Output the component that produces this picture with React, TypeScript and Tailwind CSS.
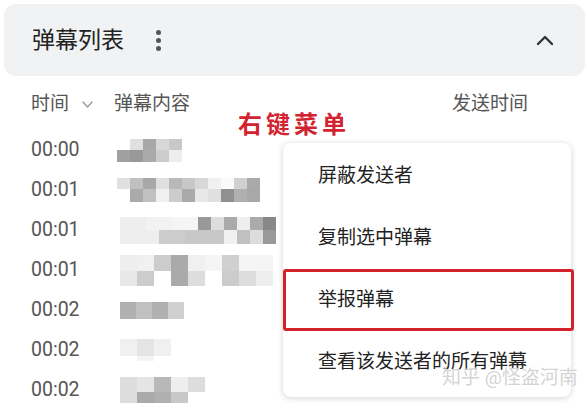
import { Fragment } from 'react';

type Mosaic = {
  cell: string;
  lines: { h: string; offset: string; cells: string[] }[];
};

const ROWS: { time: string; mosaic: Mosaic }[] = [
  {
    time: '00:00',
    mosaic: {
      cell: 'w-[13px]',
      lines: [
        { h: 'h-[11px]', offset: 'ml-[13px]', cells: ['bg-[#e0e0e0]', 'bg-[#a8a8a8]', 'bg-[#d8d8d8]', 'bg-[#c8c8c8]'] },
        { h: 'h-[12px]', offset: 'ml-0', cells: ['bg-[#a0a0a0]', 'bg-[#999999]', 'bg-[#aaaaaa]', 'bg-[#cccccc]', 'bg-[#eeeeee]'] },
      ],
    },
  },
  {
    time: '00:01',
    mosaic: {
      cell: 'w-[13px]',
      lines: [
        {
          h: 'h-[11px]',
          offset: 'ml-0',
          cells: ['bg-[#e0e0e0]', 'bg-[#c0c0c0]', 'bg-[#a8a8a8]', 'bg-[#e0e0e0]', 'bg-[#b8b8b8]', 'bg-[#c8c8c8]', 'bg-[#d8d8d8]', 'bg-[#f0f0f0]', 'bg-[#fafafa]', 'bg-[#d0d0d0]', 'bg-[#aaaaaa]'],
        },
        {
          h: 'h-[13px]',
          offset: 'ml-[13px]',
          cells: ['bg-[#aaaaaa]', 'bg-[#c0c0c0]', 'bg-[#f0f0f0]', 'bg-[#cccccc]', 'bg-[#aaaaaa]', 'bg-[#e8e8e8]', 'bg-[#e0e0e0]', 'bg-[#909090]', 'bg-[#b0b0b0]', 'bg-[#a8a8a8]'],
        },
      ],
    },
  },
  {
    time: '00:01',
    mosaic: {
      cell: 'w-[13px]',
      lines: [
        {
          h: 'h-[13px]',
          offset: 'ml-[3px]',
          cells: ['bg-[#eeeeee]', 'bg-[#eeeeee]', 'bg-[#f2f2f2]', 'bg-[#f2f2f2]', 'bg-[#f5f5f5]', 'bg-[#f5f5f5]', 'bg-[#999999]', 'bg-[#dddddd]', 'bg-[#aaaaaa]', 'bg-[#eeeeee]', 'bg-[#aaaaaa]', 'bg-[#888888]'],
        },
        {
          h: 'h-[14px]',
          offset: 'ml-[3px]',
          cells: ['bg-[#eeeeee]', 'bg-[#eeeeee]', 'bg-[#eeeeee]', 'bg-[#cccccc]', 'bg-[#cccccc]', 'bg-[#c8c8c8]', 'bg-[#c8c8c8]', 'bg-[#c8c8c8]', 'bg-[#f0f0f0]', 'bg-[#c0c0c0]', 'bg-[#dddddd]', 'bg-[#999999]'],
        },
      ],
    },
  },
  {
    time: '00:01',
    mosaic: {
      cell: 'w-[17px]',
      lines: [
        { h: 'h-[16px]', offset: 'ml-[3px]', cells: ['bg-[#eeeeee]', 'bg-[#f0f0f0]', 'bg-[#cccccc]', 'bg-[#aaaaaa]', 'bg-[#f0f0f0]', 'bg-[#f5f5f5]', 'bg-[#d0d0d0]', 'bg-[#f5f5f5]', 'bg-[#f5f5f5]'] },
        { h: 'h-[15px]', offset: 'ml-[3px]', cells: ['bg-[#e8e8e8]', 'bg-[#cccccc]', 'bg-[#ffffff]', 'bg-[#aaaaaa]', 'bg-[#dddddd]', 'bg-[#ffffff]', 'bg-[#cccccc]', 'bg-[#dddddd]', 'bg-[#eeeeee]'] },
      ],
    },
  },
  {
    time: '00:02',
    mosaic: {
      cell: 'w-[16px]',
      lines: [{ h: 'h-[17px]', offset: 'ml-[3px]', cells: ['bg-[#b0b0b0]', 'bg-[#c0c0c0]', 'bg-[#b0b0b0]', 'bg-[#d0d0d0]'] }],
    },
  },
  {
    time: '00:02',
    mosaic: {
      cell: 'w-[17px]',
      lines: [
        { h: 'h-[17px]', offset: 'ml-[3px]', cells: ['bg-[#f0f0f0]', 'bg-[#e4e4e4]', 'bg-[#f0f0f0]'] },
        { h: 'h-[5px]', offset: 'ml-[20px]', cells: ['bg-[#f4f4f4]'] },
      ],
    },
  },
  {
    time: '00:02',
    mosaic: {
      cell: 'w-[17px]',
      lines: [
        { h: 'h-[15px]', offset: 'ml-[3px]', cells: ['bg-[#dddddd]', 'bg-[#e5e5e5]', 'bg-[#b8b8b8]', 'bg-[#eeeeee]', 'bg-[#dddddd]'] },
        { h: 'h-[12px]', offset: 'ml-[3px]', cells: ['bg-[#dddddd]', 'bg-[#aaaaaa]', 'bg-[#b0b0b0]', 'bg-[#c8c8c8]'] },
      ],
    },
  },
];

const MENU_ITEMS = ['屏蔽发送者', '复制选中弹幕', '举报弹幕', '查看该发送者的所有弹幕'];

export default function App() {
  return (
    <div
      className="relative w-[585px] h-[403px] overflow-hidden bg-white"
      style={{ fontFamily: 'Roboto, "Noto Sans CJK SC", sans-serif' }}
    >
      {/* Header */}
      <div className="ml-[4px] mt-[4px] h-[72px] rounded-[12px] bg-[#f1f2f4] flex items-center pl-[28px] pr-[31px]">
        <h1 className="text-[23px] text-[#222] leading-none">弹幕列表</h1>
        <div className="ml-[32px] flex flex-col gap-[3px]">
          <span className="w-[5px] h-[5px] rounded-full bg-[#555]" />
          <span className="w-[5px] h-[5px] rounded-full bg-[#555]" />
          <span className="w-[5px] h-[5px] rounded-full bg-[#555]" />
        </div>
        <div className="flex-1" />
        <svg width="18" height="12" viewBox="0 0 18 12" fill="none">
          <path d="M2 10 L9 3 L16 10" stroke="#333" strokeWidth="2.4" strokeLinecap="round" strokeLinejoin="round" />
        </svg>
      </div>

      {/* Table */}
      <div className="mt-[8px] text-[19px] text-[#555]">
        <div className="h-[40px] flex items-center pl-[31px] mb-[6px]">
          <div className="w-[83px] flex items-center gap-[13px]">
            <span>时间</span>
            <svg width="11" height="7" viewBox="0 0 11 7" fill="none">
              <path d="M1 1 L5.5 6 L10 1" stroke="#999" strokeWidth="1.3" strokeLinecap="round" strokeLinejoin="round" />
            </svg>
          </div>
          <span>弹幕内容</span>
          <div className="flex-1" />
          <span className="mr-[57px]">发送时间</span>
        </div>

        {ROWS.map((row, i) => (
          <div key={i} className="h-[40px] flex items-center pl-[31px]">
            <span className="w-[86px] text-[19.5px]">{row.time}</span>
            <div className="flex flex-col blur-[0.6px]">
              {row.mosaic.lines.map((line, j) => (
                <div key={j} className={`flex ${line.offset}`}>
                  {line.cells.map((c, k) => (
                    <span key={k} className={`${row.mosaic.cell} ${line.h} ${c}`} />
                  ))}
                </div>
              ))}
            </div>
            {i === 0 && (
              <Fragment>
                <div className="flex-1" />
                <span className="mr-[30px] text-[#c4c4c4] blur-[0.5px]">2023-01-01 00:00</span>
              </Fragment>
            )}
          </div>
        ))}
      </div>

      {/* Annotation */}
      <div className="absolute left-[238px] top-[113px] text-[24px] font-bold tracking-[4px] text-[#d32330] leading-none">
        右键菜单
      </div>

      {/* Context menu */}
      <div className="absolute left-[283px] top-[143px] w-[288px] h-[254px] rounded-[8px] bg-white shadow-[0_1px_6px_rgba(0,0,0,0.18)] pt-[2px] text-[19px] text-[#222]">
        {MENU_ITEMS.map((item, i) => (
          <div
            key={item}
            className={
              i === 2
                ? 'h-[62px] flex items-center pl-[32px] -mr-[3px] border-[3px] border-[#d3222e] rounded-[3px]'
                : 'h-[62px] flex items-center pl-[35px]'
            }
          >
            {item}
          </div>
        ))}
      </div>

      {/* Watermark */}
      <div className="absolute left-[442px] top-[368px] text-[19px] text-[#c9c9c9]/80 leading-none [text-shadow:0_0_1px_#fff]">
        知乎 @怪盗河南
      </div>
    </div>
  );
}
